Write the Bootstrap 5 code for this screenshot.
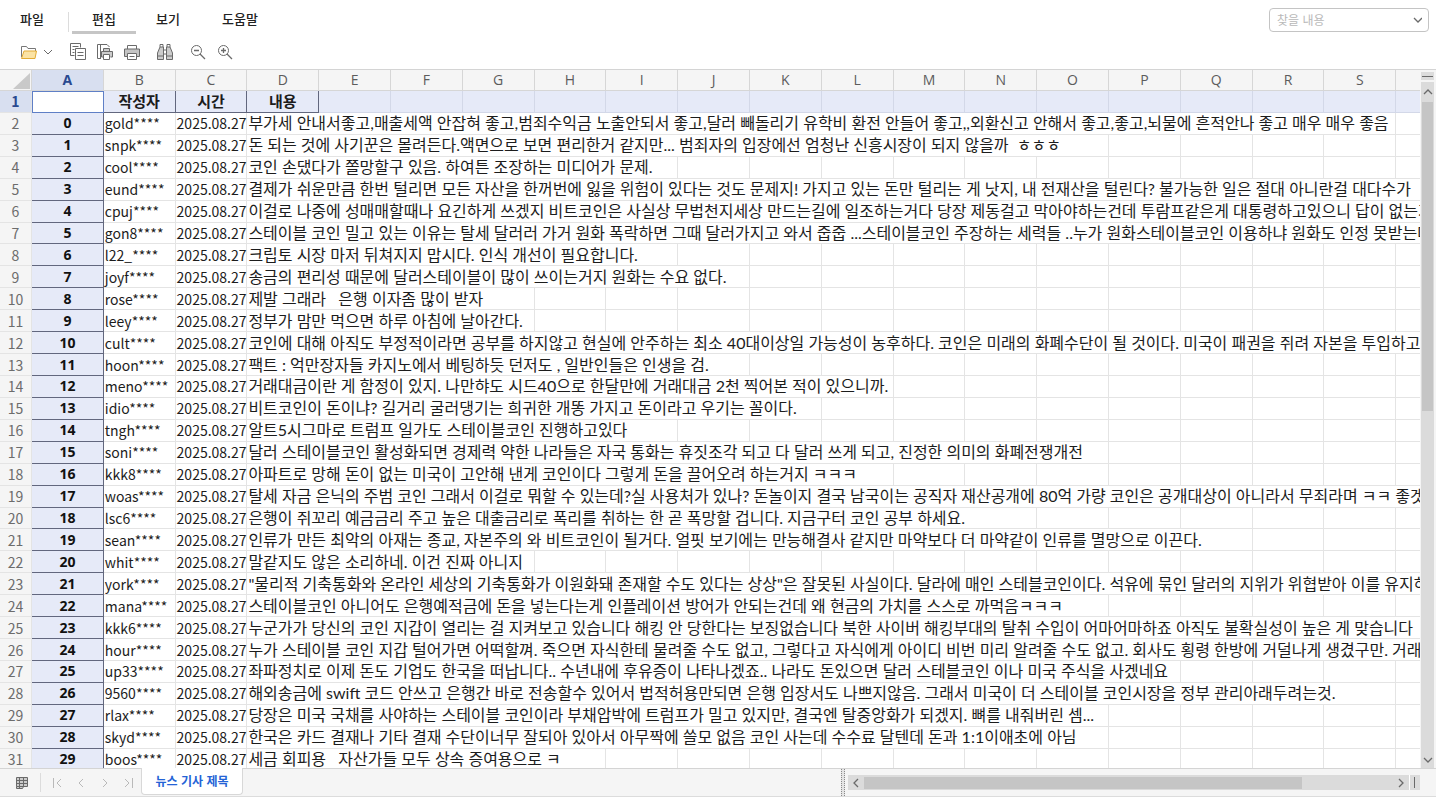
<!DOCTYPE html>
<html lang="ko">
<head>
<meta charset="utf-8">
<meta name="viewport" content="width=device-width, initial-scale=1">
<title>뉴스 기사 제목</title>
<link href="https://cdn.jsdelivr.net/npm/bootstrap@5.3.0/dist/css/bootstrap.min.css" rel="stylesheet">
<style>
body{font-family:"Noto Sans CJK KR","Open Sans",sans-serif;color:#1c1c1c;background:#fff}
.menu-tab{font-size:13px;font-weight:500;line-height:20px;height:25px;width:64px;color:#222;background:none;border:0;border-bottom:3px solid transparent;padding:0 0 2px}
.menu-tab.active{border-bottom-color:#c6c6c6}
.menus{height:38px;padding-top:9px}
.menus .rule{height:20px;margin:3px 3px 0 4px}
.tools{height:28px;padding-left:20px}
.tool{border:0;background:none;padding:0;width:18px;height:18px;margin-right:9px;display:flex;align-items:center;justify-content:center}
.tool.wide-gap{margin-right:15px}
.tool.drop{width:12px;margin-left:-5px}
.tool svg,.nav-arrow svg,.sb svg,.hs svg,.find svg{display:block;fill:none;stroke:#6a6a6a}
.find{width:160px;height:24px;margin:8px 7px 0 0;border:1px solid #c4c4c4;border-radius:4px;padding:0 6px 0 7px}
.find input{font-size:12px;border:0;outline:0;padding:0;background:none}
.find input::placeholder{color:#b9b9b9;opacity:1}
.ribbon{border-bottom:1px solid #d4d4d4;height:70px}
.pane{min-width:0;overflow:hidden}
.cells{table-layout:fixed;border-collapse:separate;border-spacing:0;width:calc(100% + 48px);height:calc(100% + 3px);font-size:16px;line-height:20px}
.cells th,.cells td{padding:0 1px;border-right:1px solid #e4e4e4;border-bottom:1px solid #e4e4e4;white-space:nowrap;vertical-align:middle}
.cells .num{width:32px}
.cells td.comment{font-family:Lato,"Noto Sans CJK KR",sans-serif}
.cells thead th{background:#f5f5f5;font-size:14px;font-weight:400;color:#5c5c5c;text-align:center;font-family:"Open Sans",sans-serif;border-color:#d6d6d6}
.cells tbody th.rowno{background:#f5f5f5;font-size:14px;font-weight:400;color:#6c6c6c;text-align:center}
.cells tbody td.idx{background:#e6eaf8;font:700 14px/20px "Open Sans",sans-serif;text-align:center;border-color:#62677e;color:#111}
.cells td.plain{font-size:14px}
.cells tr.first td{background:#e6eaf8;border-color:#d3d8e8}
.cells tr.first td.title-cell{font-size:15px;font-weight:700;text-align:center;border-color:#62677e}
.cells tr.first td.cursor{background:#fff;border:1px solid #5f7fc6}
.cells thead th.sel,.cells tbody th.rowno.sel{background:#d8dff0;color:#2a4a90;font-weight:700}
.corner svg{display:block;margin:2px 0 0 10px}
.sb{width:16px;padding:2px 2px 0 1px;background:#f5f5f5}
.sb .grip,.hs .grip{background:#dcdcdc}
.sb .grip{margin-bottom:2px}
.track{background:#dbdbdb}
.sb .track{padding:0 1px}
.thumb{background:#c5c5c5}
.foot{height:29px;background:#f5f5f5;border-top:1px solid #d4d4d4;border-bottom:1px solid #dcdcdc}
.nav-arrow{width:24px;height:24px;margin-top:2px;border:0;background:none;padding:0;display:flex;align-items:center;justify-content:center}
.foot .nav-arrow svg{stroke:#b9b9b9}
.foot .nav-arrow.dark svg{stroke:#6a6a6a}
.sheets{margin:2px 6px 0 10px}
.sheet-tab{width:102px;height:27px;margin-top:-1px;border:1px solid #d8d8d8;border-top:0;border-radius:0 0 4px 4px;background:#fff;color:#2463d6;font-size:12px;font-weight:700;padding:0}
.hs{width:572px;height:15px}
.hs .nav-arrow{width:16px;height:15px;margin-top:0}
.split{width:4px;margin-right:3px;border:1px dotted #8a8a8a;border-width:0 1px;background:#e4e4e4}
.rule{width:1px;background:#dcdcdc}
</style>
</head>
<body class="d-flex flex-column vh-100 overflow-hidden">
<header class="ribbon flex-shrink-0">
  <div class="d-flex justify-content-between">
    <nav class="menus d-flex" aria-label="메뉴">
      <button class="menu-tab">파일</button>
      <span class="rule"></span>
      <button class="menu-tab active">편집</button>
      <button class="menu-tab">보기</button>
      <button class="menu-tab ms-2">도움말</button>
    </nav>
    <div class="find d-flex align-items-center">
      <input class="flex-fill w-100" type="text" placeholder="찾을 내용" aria-label="찾을 내용">
      <svg width="10" height="8"><path d="M1 2l4 4 4-4" stroke-width="1.3"/></svg>
    </div>
  </div>
  <div class="tools d-flex align-items-center">
    <button class="tool" aria-label="열기"><svg width="18" height="18" viewBox="0 0 18 18"><path d="M1.500 14V3.500h5l1.500 2h7.500V8" stroke="#777"/><path d="M1.500 15.500l2.500-7.500h12.500l-1.500 7.500z" fill="#fbe3a4" stroke="#e3ab34"/></svg></button>
    <button class="tool drop wide-gap" aria-label="열기 옵션"><svg width="10" height="8"><path d="M1 2l4 4 4-4"/></svg></button>
    <button class="tool" aria-label="복사"><svg width="18" height="18" viewBox="0 0 18 18"><path d="M5.500 12.500h-4v-12h10v4M3.500 3.500h6M3.500 6.500h2M3.500 9.500h2"/><path d="M6.500 5.500h10v11h-10z" fill="#fff"/><path d="M8.500 9.500h6M8.500 12.500h6"/></svg></button>
    <button class="tool" aria-label="미리 보기"><svg width="18" height="18" viewBox="0 0 18 18"><path d="M5 15.500H1.500v-14h9.500l2.500 2.500M4.500 2v13"/><path d="M7.500 8.500v-3h6v3M7.500 14h-2V8.500h11V14h-2" fill="#ccc"/><path d="M7.500 11.500h6v5h-6z" fill="#fff"/></svg></button>
    <button class="tool wide-gap" aria-label="인쇄"><svg width="18" height="18" viewBox="0 0 18 18"><path d="M4.500 6V2.500h9V6"/><path d="M4.500 13.500h-3V6h15v7.500h-3" fill="#c4c4c4"/><path d="M4.500 10.500h9v6h-9z" fill="#fff"/><path d="M6.500 13.500h5"/></svg></button>
    <button class="tool wide-gap" aria-label="찾기"><svg width="18" height="18" viewBox="0 0 18 18"><path d="M4 4h3.500v12.500h-6V10zM14 4h-3.500v12.500h6V10z" fill="#ccc"/><path d="M4 4V1.500h3V4M11 4V1.500h3V4M7.500 7h3v4h-3M1.500 13h6M10.500 13h6"/></svg></button>
    <button class="tool" aria-label="축소"><svg width="18" height="18" viewBox="0 0 18 18"><circle cx="7.500" cy="7.500" r="5"/><path d="M11 11l5 5M5 7.500h5" stroke-width="1.300"/></svg></button>
    <button class="tool" aria-label="확대"><svg width="18" height="18" viewBox="0 0 18 18"><circle cx="7.500" cy="7.500" r="5"/><path d="M11 11l5 5M5 7.500h5M7.500 5v5" stroke-width="1.300"/></svg></button>
  </div>
</header>
<main class="d-flex flex-fill overflow-hidden">
  <div class="pane flex-fill"><table class="cells"><thead><tr id="letters"></tr></thead><tbody id="rows"></tbody></table></div>
  <div class="sb d-flex flex-column flex-shrink-0" aria-hidden="true">
    <div class="grip"><svg width="13" height="8"><path d="M1 4.500h11"/></svg></div>
    <div class="track flex-fill d-flex flex-column align-items-center">
      <svg class="my-1" width="10" height="12"><path d="M1 8l4-4 4 4" stroke-width="1.300"/></svg>
      <div class="thumb w-100" style="height:45%"></div>
      <svg class="mt-auto mb-1" width="10" height="8"><path d="M1 2l4 4 4-4" stroke-width="1.300"/></svg>
    </div>
  </div>
</main>
<footer class="foot d-flex justify-content-between flex-shrink-0">
  <div class="d-flex">
    <button class="nav-arrow dark sheets" aria-label="시트 목록"><svg width="14" height="14"><path d="M1.500 1.500h11v9h-11zM1.500 10.500v2h6l1-2" fill="#ccc"/><path d="M1.500 4.500h11M1.500 7.500h11M4.500 1.500v11M8.500 1.500v9"/></svg></button>
    <span class="rule my-1 me-1"></span>
    <button class="nav-arrow" aria-label="처음"><svg width="12" height="12"><path d="M2.500 1v10M10 2L6 6l4 4"/></svg></button>
    <button class="nav-arrow" aria-label="이전"><svg width="12" height="12"><path d="M8 2L4 6l4 4"/></svg></button>
    <button class="nav-arrow" aria-label="다음"><svg width="12" height="12"><path d="M4 2l4 4-4 4"/></svg></button>
    <button class="nav-arrow" aria-label="마지막"><svg width="12" height="12"><path d="M9.500 1v10M2 2l4 4-4 4"/></svg></button>
    <button class="sheet-tab">뉴스 기사 제목</button>
  </div>
  <div class="d-flex pe-3" aria-hidden="true">
    <div class="split"></div>
    <div class="hs d-flex align-self-center">
      <div class="track flex-fill d-flex align-items-center">
        <div class="nav-arrow dark"><svg width="10" height="10"><path d="M7 1L3 5l4 4" stroke-width="1.300"/></svg></div>
        <div class="thumb" style="width:78%;height:80%"></div>
        <div class="nav-arrow dark ms-auto"><svg width="10" height="10"><path d="M3 1l4 4-4 4" stroke-width="1.300"/></svg></div>
      </div>
      <div class="grip border-start border-white"><svg width="10" height="15"><path d="M4.500 2v11"/></svg></div>
    </div>
  </div>
</footer>
<script src="https://cdn.jsdelivr.net/npm/bootstrap@5.3.0/dist/js/bootstrap.bundle.min.js"></script>
<script>
// Each entry: author, number of columns the comment spills over, comment
const comments = [
["gold",16,"부가세 안내서좋고,매출세액 안잡혀 좋고,범죄수익금 노출안되서 좋고,달러 빼돌리기 유학비 환전 안들어 좋고,,외환신고 안해서 좋고,좋고,뇌물에 흔적안나 좋고 매우 매우 좋음"],
["snpk",12,"돈 되는 것에 사기꾼은 몰려든다.액면으로 보면 편리한거 같지만... 범죄자의 입장에선 엄청난 신흥시장이 되지 않을까  ㅎㅎㅎ"],
["cool",6,"코인 손댔다가 쫄망할구 있음. 하여튼 조장하는 미디어가 문제."],
["eund",17,"결제가 쉬운만큼 한번 털리면 모든 자산을 한꺼번에 잃을 위험이 있다는 것도 문제지! 가지고 있는 돈만 털리는 게 낫지, 내 전재산을 털린다? 불가능한 일은 절대 아니란걸 대다수가"],
["cpuj",17,"이걸로 나중에 성매매할때나 요긴하게 쓰겠지 비트코인은 사실상 무법천지세상 만드는길에 일조하는거다 당장 제동걸고 막아야하는건데 투람프같은게 대통령하고있으니 답이 없는거"],
["gon8",17,"스테이블 코인 밀고 있는 이유는 탈세 달러러 가거 원화 폭락하면 그때 달러가지고 와서 줍줍 ...스테이블코인 주장하는 세력들 ..누가 원화스테이블코인 이용하냐 원화도 인정 못받는데"],
["l22_",6,"크립토 시장 마저 뒤쳐지지 맙시다. 인식 개선이 필요합니다."],
["joyf",7,"송금의 편리성 때문에 달러스테이블이 많이 쓰이는거지 원화는 수요 없다."],
["rose",4,"제발 그래라   은행 이자좀 많이 받자"],
["leey",4,"정부가 맘만 먹으면 하루 아침에 날아간다."],
["cult",17,"코인에 대해 아직도 부정적이라면 공부를 하지않고 현실에 안주하는 최소 40대이상일 가능성이 농후하다. 코인은 미래의 화폐수단이 될 것이다. 미국이 패권을 쥐려 자본을 투입하고"],
["hoon",7,"팩트 : 억만장자들 카지노에서 베팅하듯 던저도 , 일반인들은 인생을 검."],
["meno",9,"거래대금이란 게 함정이 있지. 나만햐도 시드40으로 한달만에 거래대금 2천 찍어본 적이 있으니까."],
["idio",8,"비트코인이 돈이냐? 길거리 굴러댕기는 희귀한 개똥 가지고 돈이라고 우기는 꼴이다."],
["tngh",6,"알트5시그마로 트럼프 일가도 스테이블코인 진행하고있다"],
["soni",12,"달러 스테이블코인 활성화되면 경제력 약한 나라들은 자국 통화는 휴짓조각 되고 다 달러 쓰게 되고, 진정한 의미의 화폐전쟁개전"],
["kkk8",9,"아파트로 망해 돈이 없는 미국이 고안해 낸게 코인이다 그렇게 돈을 끌어오려 하는거지 ㅋㅋㅋ"],
["woas",17,"탈세 자금 은닉의 주범 코인 그래서 이걸로 뭐할 수 있는데?실 사용처가 있나? 돈놀이지 결국 남국이는 공직자 재산공개에 80억 가량 코인은 공개대상이 아니라서 무죄라며 ㅋㅋ 좋겟"],
["lsc6",11,"은행이 쥐꼬리 예금금리 주고 높은 대출금리로 폭리를 취하는 한 곧 폭망할 겁니다. 지금구터 코인 공부 하세요."],
["sean",14,"인류가 만든 최악의 아재는 종교, 자본주의 와 비트코인이 될거다. 얼핏 보기에는 만능해결사 같지만 마약보다 더 마약같이 인류를 멸망으로 이끈다."],
["whit",4,"말같지도 않은 소리하네. 이건 진짜 아니지"],
["york",17,"\"물리적 기축통화와 온라인 세상의 기축통화가 이원화돼 존재할 수도 있다는 상상\"은 잘못된 사실이다. 달라에 매인 스테블코인이다. 석유에 묶인 달러의 지위가 위협받아 이를 유지하"],
["mana",12,"스테이블코인 아니어도 은행예적금에 돈을 넣는다는게 인플레이션 방어가 안되는건데 왜 현금의 가치를 스스로 까먹음ㅋㅋㅋ"],
["kkk6",17,"누군가가 당신의 코인 지갑이 열리는 걸 지켜보고 있습니다 해킹 안 당한다는 보징없습니다 북한 사이버 해킹부대의 탈취 수입이 어마어마하죠 아직도 불확실성이 높은 게 맞습니다"],
["hour",17,"누가 스테이블 코인 지갑 털어가면 어떡할껴. 죽으면 자식한테 물려줄 수도 없고, 그렇다고 자식에게 아이디 비번 미리 알려줄 수도 없고. 회사도 횡령 한방에 거덜나게 생겼구만. 거래"],
["up33",13,"좌파정치로 이제 돈도 기업도 한국을 떠납니다.. 수년내에 후유증이 나타나겠죠.. 나라도 돈있으면 달러 스테블코인 이나 미국 주식을 사겠네요"],
["9560",16,"해외송금에 swift 코드 안쓰고 은행간 바로 전송할수 있어서 법적허용만되면 은행 입장서도 나쁘지않음. 그래서 미국이 더 스테이블 코인시장을 정부 관리아래두려는것."],
["rlax",12,"당장은 미국 국채를 사야하는 스테이블 코인이라 부채압박에 트럼프가 밀고 있지만, 결국엔 탈중앙화가 되겠지. 뼈를 내줘버린 셈..."],
["skyd",12,"한국은 카드 결재나 기타 결재 수단이너무 잘되아 있아서 아무짝에 쓸모 없음 코인 사는데 수수료 달텐데 돈과 1:1이애초에 아님"],
["boos",5,"세금 회피용   자산가들 모두 상속 증여용으로 ㅋ"]
];
const add = (tr, tag, cls, text = "", span = 1) => {
  const el = document.createElement(tag);
  el.className = cls; el.textContent = text;
  if (span > 1) el.colSpan = span;
  tr.append(el); return el;
};
const letters = document.getElementById("letters");
add(letters, "th", "num corner").innerHTML = '<svg width="20" height="18"><path d="M19 1v16H2z" fill="#c9c9c9"/></svg>';
// Column T is only partly in view, so its letter stays out of sight
[..."ABCDEFGHIJKLMNOPQRS", ""].forEach((c, i) => add(letters, "th", i ? "" : "sel", c));
const body = document.getElementById("rows");
const first = body.insertRow(); first.className = "first";
add(first, "th", "rowno sel", "1");
add(first, "td", "cursor");
["작성자", "시간", "내용"].forEach(t => add(first, "td", "title-cell", t));
for (let i = 0; i < 16; i++) add(first, "td", "");
comments.forEach(([who, span, text], i) => {
  const tr = body.insertRow();
  add(tr, "th", "rowno", i + 2);
  add(tr, "td", "idx", i);
  add(tr, "td", "plain", who + "****");
  add(tr, "td", "plain", "2025.08.27");
  add(tr, "td", "comment", text.replace(/ {2,}/g, s => "\u00a0".repeat(s.length)), span);
  for (let k = span; k < 17; k++) add(tr, "td", "");
});
</script>
</body>
</html>
